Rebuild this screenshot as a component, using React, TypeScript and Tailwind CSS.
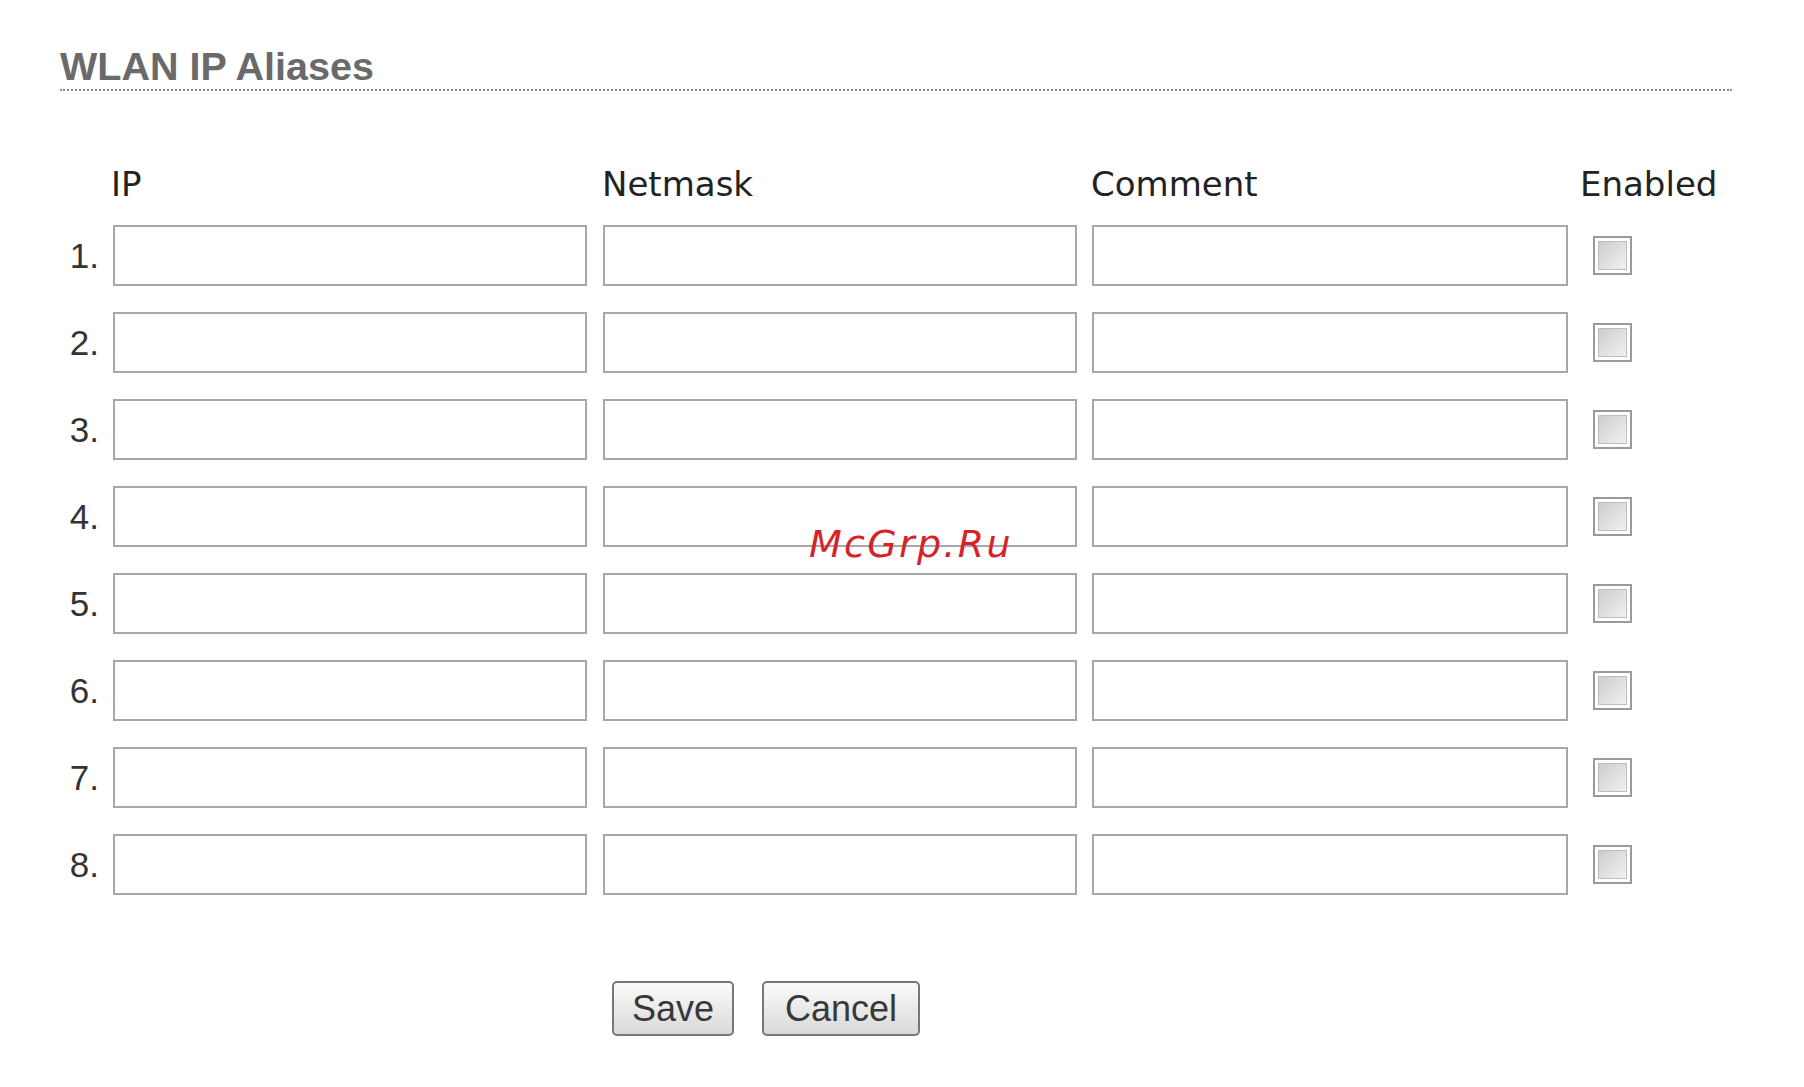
import React from "react";

const rows = [1, 2, 3, 4, 5, 6, 7, 8];

const labelFont = "font-['DejaVu_Sans',Verdana,sans-serif]";
const arialFont = "font-['Liberation_Sans',Arial,sans-serif]";

function Checkbox() {
  return (
    <div className="w-[39px] h-[39px] border-2 border-[#9a9a9a] bg-white p-[3px]">
      <div className="w-full h-full border border-[#bdbdbd] bg-gradient-to-br from-[#cdcdcd] to-[#f1f1f1]" />
    </div>
  );
}

function Field({ width, className = "" }: { width: string; className?: string }) {
  return (
    <input
      type="text"
      className={`${width} h-[61px] border-2 border-[#a8a8a8] bg-white outline-none ${className}`}
    />
  );
}

export default function App() {
  return (
    <div className="relative w-full min-h-screen bg-white pl-[60px] pt-[47px]">
      {/* Section title */}
      <div className="w-[1672px] border-b-2 border-dotted border-[#8a8a8a] pb-[3px]">
        <h1 className={`${arialFont} text-[39.5px] leading-[39px] font-bold text-[#6a6a6a]`}>
          WLAN IP Aliases
        </h1>
      </div>

      {/* Column labels */}
      <div className={`${labelFont} mt-[76px] flex text-[34px] leading-[34px] text-[#222]`}>
        <div className="w-[51px]" />
        <div className="w-[491px]">IP</div>
        <div className="w-[489px]">Netmask</div>
        <div className="w-[489px]">Comment</div>
        <div>Enabled</div>
      </div>

      {/* Alias rows */}
      <div className="mt-[24px] flex flex-col gap-[26px]">
        {rows.map((n) => (
          <div key={n} className="flex items-center h-[61px]">
            <span
              className={`${arialFont} w-[53px] pr-[14px] text-right text-[35px] leading-none text-[#333]`}
            >
              {n}.
            </span>
            <Field width="w-[474px]" />
            <Field width="w-[474px]" className="ml-[16px]" />
            <Field width="w-[476px]" className="ml-[15px]" />
            <div className="ml-[25px]">
              <Checkbox />
            </div>
          </div>
        ))}
      </div>

      {/* Actions */}
      <div className="mt-[86px] ml-[552px] flex gap-[28px]">
        <button
          className={`${arialFont} w-[122px] h-[55px] rounded-[5px] border-2 border-[#777] bg-gradient-to-b from-[#fbfbfb] to-[#d9d9d9] text-[36px] leading-none text-[#383838]`}
        >
          Save
        </button>
        <button
          className={`${arialFont} w-[158px] h-[55px] rounded-[5px] border-2 border-[#777] bg-gradient-to-b from-[#fbfbfb] to-[#d9d9d9] text-[36px] leading-none text-[#383838]`}
        >
          Cancel
        </button>
      </div>

      {/* Watermark */}
      <span
        className={`${labelFont} absolute left-[809px] top-[525px] italic text-[38px] leading-[38px] tracking-[2.3px] text-[#d6232a]`}
      >
        McGrp.Ru
      </span>
    </div>
  );
}
